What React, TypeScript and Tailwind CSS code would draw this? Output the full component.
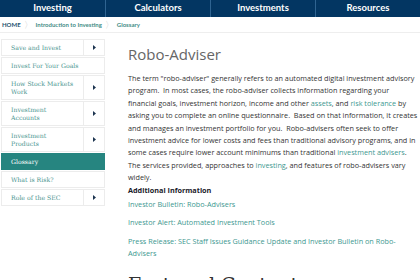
import React from "react";

const navItems = ["Investing", "Calculators", "Investments", "Resources"];

const side: { label: string[]; arrow: boolean; active?: boolean }[] = [
  { label: ["Save and Invest"], arrow: true },
  { label: ["Invest For Your Goals"], arrow: false },
  { label: ["How Stock Markets", "Work"], arrow: true },
  { label: ["Investment", "Accounts"], arrow: true },
  { label: ["Investment", "Products"], arrow: true },
  { label: ["Glossary"], arrow: false, active: true },
  { label: ["What is Risk?"], arrow: false },
  { label: ["Role of the SEC"], arrow: true },
];

const sans = { fontFamily: '"Open Sans", "Liberation Sans", sans-serif' };

export default function App() {
  return (
    <div className="w-[420px] h-[280px] overflow-hidden bg-white" style={sans}>
      <nav className="grid grid-cols-4 h-[17px] bg-[#033662]" style={{ fontFamily: 'Lato, "Open Sans", sans-serif' }}>
        {navItems.map((n, i) => (
          <div
            key={n}
            className={`flex items-center justify-center text-white font-bold text-[9.5px] ${i > 0 ? "border-l border-[#2f6491]" : ""}`}
          >
            {n}
          </div>
        ))}
      </nav>
      <div
        className="h-[16px] flex items-center pl-[2px] text-[6px] font-bold border-b border-[#eeeeee] gap-[3px]"
        style={{ fontFamily: 'Lato, "Open Sans", sans-serif' }}
      >
        <span className="text-[#24506e]">HOME</span>
        <span className="text-[#d0d0d0] font-normal text-[9px] leading-none">〉</span>
        <span className="text-[#3f8c86]">Introduction to Investing</span>
        <span className="text-[#d0d0d0] font-normal text-[9px] leading-none">〉</span>
        <span className="text-[#3f8c86]">Glossary</span>
      </div>
      <div className="flex">
        <aside
          className="w-[104px] ml-[1px] mt-[6px] flex flex-col gap-[1px] shrink-0"
          style={{ fontFamily: '"DejaVu Serif", "Liberation Serif", serif' }}
        >
          {side.map((s) => (
            <div
              key={s.label.join(" ")}
              className={`flex border ${s.active ? "bg-[#268580] border-[#268580]" : "bg-white border-[#ececec]"}`}
            >
              <div
                className={`flex-1 flex flex-col justify-center pl-[9px] py-[3px] text-[6.2px] leading-[8px] ${
                  s.active ? "text-white" : "text-[#4b9590]"
                } ${s.label.length > 1 ? "min-h-[23px]" : "min-h-[15px]"}`}
              >
                {s.label.map((l) => (
                  <span key={l}>{l}</span>
                ))}
              </div>
              {s.arrow && (
                <div className="w-[21px] border-l border-[#ececec] flex items-center justify-center">
                  <svg width="3" height="5" viewBox="0 0 3 5">
                    <path d="M0 0 L3 2.5 L0 5 Z" fill="#1d3550" />
                  </svg>
                </div>
              )}
            </div>
          ))}
        </aside>
        <main className="ml-[23px] mt-[11px] pr-[1px] flex-1 min-w-0">
          <h1 className="text-[15px] leading-[20px] text-[#666666] font-normal">Robo-Adviser</h1>
          <p className="mt-[8px] text-[7.25px] leading-[12.4px] text-[#333333]">
            The term "robo-adviser" generally refers to an automated digital investment advisory program.&nbsp; In most
            cases, the robo-adviser collects information regarding your financial goals, investment horizon, income and
            other <span className="text-[#3d9890]">assets</span>, and <span className="text-[#3d9890]">risk tolerance</span> by
            asking you to complete an online questionnaire.&nbsp; Based on that information, it creates and manages an
            investment portfolio for you.&nbsp; Robo-advisers often seek to offer investment advice for lower costs and fees
            than traditional advisory programs, and in some cases require lower account minimums than traditional{" "}
            <span className="text-[#3d9890]">investment advisers</span>. The services provided, approaches to{" "}
            <span className="text-[#3d9890]">investing</span>, and features of robo-advisers vary widely.
          </p>
          <h3 className="mt-[0px] text-[7.25px] leading-[12px] font-bold text-[#1a1a2a]">Additional Information</h3>
          <div className="mt-[2px] flex flex-col gap-[6.5px] text-[7.25px] leading-[12px] text-[#3d9890]">
            <span>Investor Bulletin: Robo-Advisers</span>
            <span>Investor Alert: Automated Investment Tools</span>
            <span>Press Release: SEC Staff Issues Guidance Update and Investor Bulletin on Robo-Advisers</span>
          </div>
          <h2
            className="mt-[14px] text-[19px] leading-[22px] text-[#333333]"
            style={{ fontFamily: '"DejaVu Serif", "Liberation Serif", serif' }}
          >
            Featured Content
          </h2>
        </main>
      </div>
    </div>
  );
}
